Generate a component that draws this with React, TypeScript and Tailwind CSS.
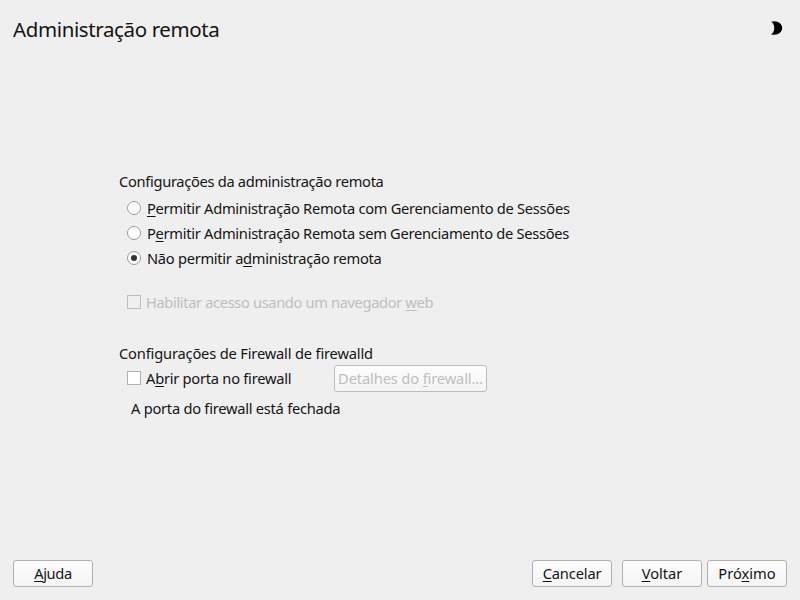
import type { ReactNode } from "react";

function Key({ children }: { children: ReactNode }) {
  return <span className="underline decoration-1 underline-offset-2 [text-decoration-skip-ink:none]">{children}</span>;
}

function Button({ children, className = "", disabled = false }: { children: ReactNode; className?: string; disabled?: boolean }) {
  return (
    <button
      disabled={disabled}
      className={`h-[27px] rounded-[3px] border bg-linear-to-b from-[#fdfdfd] to-[#f4f4f4] pb-[2px] text-center whitespace-nowrap ${disabled ? "border-[#bdbdbd] text-[#bebebe]" : "border-[#b0b0b0] text-[#141414]"} ${className}`}
    >
      {children}
    </button>
  );
}

function Radio({ checked = false, children }: { checked?: boolean; children: ReactNode }) {
  return (
    <label className="flex h-[25px] items-center gap-[6px]">
      <span className="flex size-[14px] items-center justify-center rounded-full border border-[#999] bg-white">
        {checked && <span className="size-[6px] rounded-full bg-[#333]" />}
      </span>
      <span className="tracking-[-0.28px] whitespace-nowrap">{children}</span>
    </label>
  );
}

export default function App() {
  return (
    <div className="flex h-[600px] w-[800px] flex-col overflow-hidden bg-[#efefef] font-['Noto_Sans',sans-serif] text-[14.67px] leading-[20px] text-[#141414]">
      <header className="flex h-[60px] items-start justify-between pt-[14px] pr-[17px] pl-[13px]">
        <h1 className="text-[20.5px] leading-[30px] tracking-[-0.38px]">Administração remota</h1>
        <svg className="mt-[7px]" width="13" height="14" viewBox="0 0 13 14">
          <path d="M1 0.8C7-1.2 12.2 2.4 12.2 7S7 15.2 1 13.2C5.4 11.2 5.4 2.8 1 0.8Z" fill="#000" />
        </svg>
      </header>
      <main className="flex-1 pt-[111px] pl-[119px]">
        <h2 className="h-[24px] tracking-[-0.31px]">Configurações da administração remota</h2>
        <div className="pl-2">
          <Radio><Key>P</Key>ermitir Administração Remota com Gerenciamento de Sessões</Radio>
          <Radio>P<Key>e</Key>rmitir Administração Remota sem Gerenciamento de Sessões</Radio>
          <Radio checked>Não permitir a<Key>d</Key>ministração remota</Radio>
          <label className="mt-[19px] flex h-[25px] items-center gap-[5px] text-[#bebebe]">
            <span className="size-[14px] border border-[#bdbdbd] bg-[#efefef]" />
            <span className="tracking-[-0.36px]">Habilitar acesso usando um navegador <Key>w</Key>eb</span>
          </label>
        </div>
        <h2 className="mt-[29px] h-[21px] tracking-[-0.17px]">Configurações de Firewall de firewalld</h2>
        <div className="mt-px flex h-[27px] pl-2">
          <label className="flex h-[26px] w-[207px] items-center gap-[5px]">
            <span className="size-[14px] border border-[#b0b0b0] bg-white" />
            <span className="tracking-[-0.25px]">A<Key>b</Key>rir porta no firewall</span>
          </label>
          <Button disabled className="w-[153px] tracking-[-0.13px]">Detalhes do <Key>f</Key>irewall...</Button>
        </div>
        <p className="mt-[6px] pl-3 tracking-[-0.25px]">A porta do firewall está fechada</p>
      </main>
      <footer className="flex h-[40px] items-start px-[13px]">
        <Button className="w-[80px] tracking-[-0.4px]"><Key>A</Key>juda</Button>
        <Button className="ml-auto w-[80px] tracking-[-0.15px]"><Key>C</Key>ancelar</Button>
        <Button className="ml-[10px] w-[80px]"><Key>V</Key>oltar</Button>
        <Button className="ml-[5px] w-[80px]">Pró<Key>x</Key>imo</Button>
      </footer>
    </div>
  );
}
